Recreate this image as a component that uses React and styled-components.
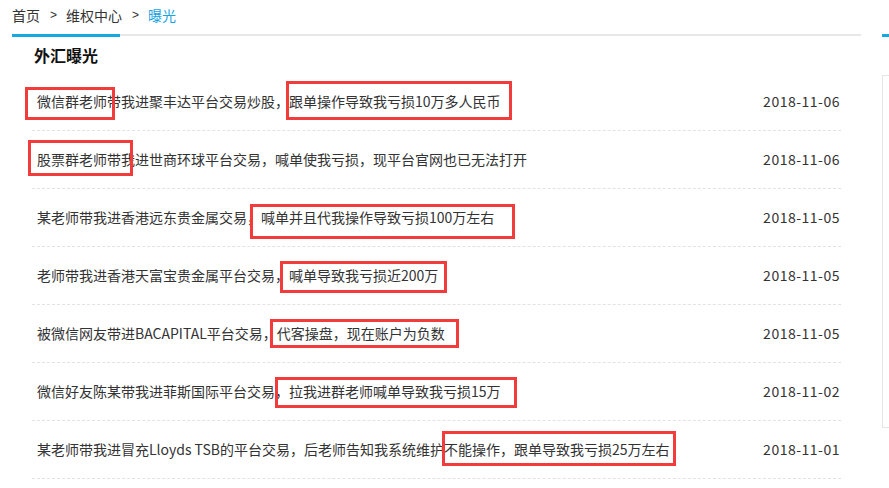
import React from "react";
import styled, { createGlobalStyle } from "styled-components";

const GlobalStyle = createGlobalStyle`
  body {
    margin: 0;
    background: #fff;
    font-family: "Microsoft YaHei", "Noto Sans CJK SC", "Noto Sans", sans-serif;
    color: #333;
  }
`;

const items = [
  {
    text: "微信群老师带我进聚丰达平台交易炒股，跟单操作导致我亏损10万多人民币",
    date: "2018-11-06",
    marks: [
      { left: -7, top: 14, width: 90, height: 33 },
      { left: 254, top: 8, width: 226, height: 39 },
    ],
  },
  {
    text: "股票群老师带我进世商环球平台交易，喊单使我亏损，现平台官网也已无法打开",
    date: "2018-11-06",
    marks: [{ left: -4, top: 9, width: 105, height: 36 }],
  },
  {
    text: "某老师带我进香港远东贵金属交易，喊单并且代我操作导致亏损100万左右",
    date: "2018-11-05",
    marks: [{ left: 218, top: 15, width: 265, height: 35 }],
  },
  {
    text: "老师带我进香港天富宝贵金属平台交易，喊单导致我亏损近200万",
    date: "2018-11-05",
    marks: [{ left: 248, top: 14, width: 167, height: 32 }],
  },
  {
    text: "被微信网友带进BACAPITAL平台交易，代客操盘，现在账户为负数",
    date: "2018-11-05",
    marks: [{ left: 238, top: 14, width: 189, height: 29 }],
  },
  {
    text: "微信好友陈某带我进菲斯国际平台交易，拉我进群老师喊单导致我亏损15万",
    date: "2018-11-02",
    marks: [{ left: 243, top: 14, width: 242, height: 31 }],
  },
  {
    text: "某老师带我进冒充Lloyds TSB的平台交易，后老师告知我系统维护不能操作，跟单导致我亏损25万左右",
    date: "2018-11-01",
    marks: [{ left: 410, top: 10, width: 234, height: 35 }],
  },
];

const Page = styled.div`
  display: flex;
  gap: 21px;
  width: 889px;
  height: 488px;
  overflow: hidden;
`;

const Main = styled.div`
  width: 849px;
  margin-left: 12px;
  flex-shrink: 0;
`;

const Crumbs = styled.div`
  display: flex;
  align-items: center;
  height: 34px;
  font-size: 14px;
  line-height: 20px;
  padding-bottom: 4px;
  box-sizing: border-box;
`;

const Crumb = styled.span`
  color: ${(p) => (p.$active ? "#1aa3df" : "#333")};
`;

const Sep = styled.span`
  font-family: "Liberation Sans", sans-serif;
  font-size: 12px;
  margin: 0 9px 0 10px;
  color: #333;
`;

const TabLine = styled.div`
  height: 2px;
  background: #e8e8e8;
`;

const TabBar = styled.div`
  width: ${(p) => p.$w}px;
  height: 3px;
  background: #16a8e1;
`;

const Title = styled.h2`
  margin: 0;
  height: 37px;
  padding: 2px 0 0 22px;
  box-sizing: border-box;
  font-size: 16px;
  line-height: 35px;
  font-weight: bold;
  color: #111;
`;

const List = styled.ul`
  list-style: none;
  margin: 0 0 0 20px;
  padding: 0;
  width: 809px;
`;

const Row = styled.li`
  position: relative;
  display: flex;
  align-items: center;
  justify-content: space-between;
  height: 58px;
  padding: 0 1px 1px 5px;
  box-sizing: border-box;
  border-bottom: 1px dashed #e3e3e3;
  font-size: 14px;
  line-height: 20px;
`;

const Caption = styled.span`
  color: #333;
  white-space: nowrap;
`;

const Date = styled.span`
  color: #333;
  letter-spacing: 0.5px;
`;

const Mark = styled.div`
  position: absolute;
  border: 3px solid #f23b3b;
  box-sizing: border-box;
  pointer-events: none;
`;

const Side = styled.div`
  flex: 1;
`;

const SideHead = styled.div`
  height: 34px;
`;

const SideBox = styled.div`
  margin-top: 38px;
  height: 351px;
  border: 1px solid #e5e5e5;
  border-right: none;
`;

export default function App() {
  return (
    <>
      <GlobalStyle />
      <Page>
        <Main>
          <Crumbs>
            <Crumb>首页</Crumb>
            <Sep>&gt;</Sep>
            <Crumb>维权中心</Crumb>
            <Sep>&gt;</Sep>
            <Crumb $active>曝光</Crumb>
          </Crumbs>
          <TabLine>
            <TabBar $w={108} />
          </TabLine>
          <Title>外汇曝光</Title>
          <List>
            {items.map((item, i) => (
              <Row key={i}>
                <Caption>{item.text}</Caption>
                <Date>{item.date}</Date>
                {item.marks.map((m, j) => (
                  <Mark
                    key={j}
                    style={{ left: m.left, top: m.top, width: m.width, height: m.height }}
                  />
                ))}
              </Row>
            ))}
          </List>
        </Main>
        <Side>
          <SideHead />
          <TabBar $w={40} />
          <SideBox />
        </Side>
      </Page>
    </>
  );
}
